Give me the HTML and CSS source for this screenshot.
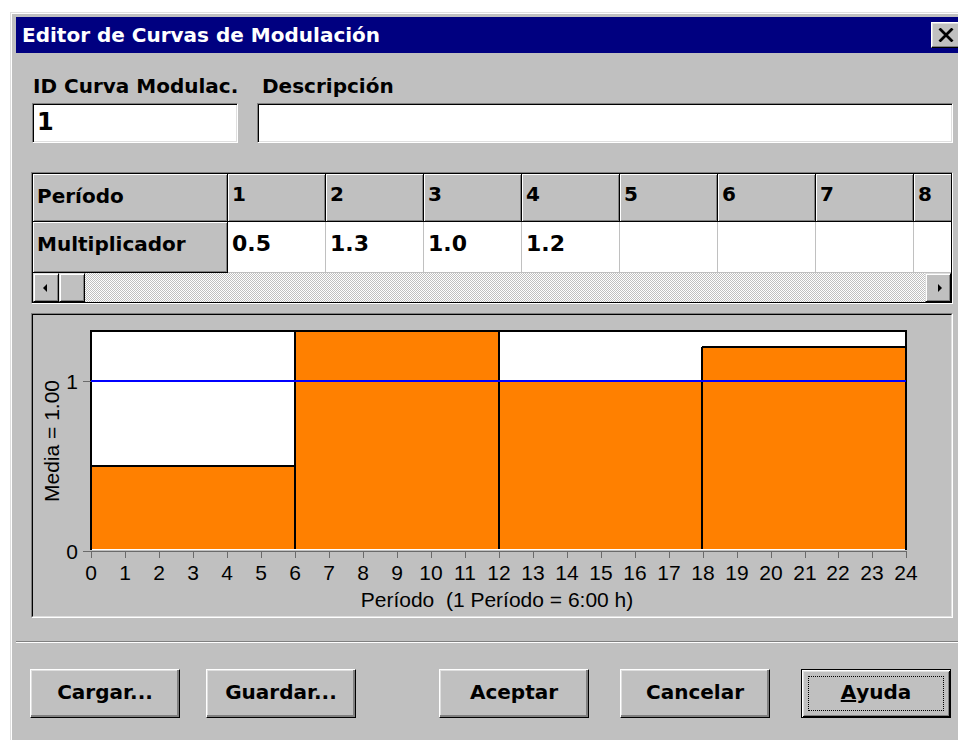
FILE: index.html
```html
<!DOCTYPE html>
<html lang="es">
<head>
    <meta charset="UTF-8">
    <title>Editor de Curvas de Modulación</title>
    <link rel="stylesheet" href="styles.css">
</head>
<body>
    <div class="window">
        <div class="titlebar">
            <span class="title">Editor de Curvas de Modulación</span>
            <button class="close" aria-label="Cerrar">
                <svg width="16" height="14" viewBox="0 0 16 14">
                    <path d="M1.5 0.5L14.5 13.5M14.5 0.5L1.5 13.5" stroke="#000" stroke-width="2.8"/>
                </svg>
            </button>
        </div>

        <div class="content">
            <!-- id + description -->
            <div class="fields">
                <label class="field-label">ID Curva Modulac.</label>
                <label class="field-label desc">Descripción</label>
                <input class="field id" type="text" value="1">
                <input class="field" type="text" value="">
            </div>

            <!-- period grid -->
            <div class="grid">
                <div class="grid-inner">
                    <div class="grid-row head">
                        <div class="cell fixed">Período</div>
                        <div class="cell">1</div>
                        <div class="cell">2</div>
                        <div class="cell">3</div>
                        <div class="cell">4</div>
                        <div class="cell">5</div>
                        <div class="cell">6</div>
                        <div class="cell">7</div>
                        <div class="cell">8</div>
                    </div>
                    <div class="grid-row data">
                        <div class="cell fixed">Multiplicador</div>
                        <div class="cell">0.5</div>
                        <div class="cell">1.3</div>
                        <div class="cell">1.0</div>
                        <div class="cell">1.2</div>
                        <div class="cell"></div>
                        <div class="cell"></div>
                        <div class="cell"></div>
                        <div class="cell"></div>
                    </div>
                    <div class="hscroll">
                        <div class="sb-btn"><span class="arrow left"></span></div>
                        <div class="sb-thumb"></div>
                        <div class="sb-track"></div>
                        <div class="sb-btn"><span class="arrow right"></span></div>
                    </div>
                </div>
            </div>

            <!-- chart -->
            <div class="chart">
                <div class="chart-inner">
                    <svg class="plot" width="918" height="301" viewBox="0 0 918 301">
                        <rect x="58" y="16" width="815" height="219" fill="#fff"/>
                        <g fill="#ff8000">
                            <rect x="58" y="151" width="204" height="83"/>
                            <rect x="262" y="16" width="204" height="218"/>
                            <rect x="466" y="66" width="203" height="168"/>
                            <rect x="669" y="32" width="204" height="202"/>
                        </g>
                        <g stroke="#000" stroke-width="2" fill="none">
                            <path d="M58 235V16H873V235"/>
                            <path d="M58 151H262"/>
                            <path d="M262 16V234M466 16V234M669 32V234"/>
                            <path d="M669 32H873"/>
                        </g>
                        <path d="M58 66H873" stroke="#0000ff" stroke-width="2"/>
                        <g stroke="#6a6a6a" stroke-width="1" shape-rendering="crispEdges">
                            <path d="M58 236.5H873.5"/>
                            <path d="M50 66.5H58M50 236.5H58"/>
                            <path d="M58.5 236V243M92.5 236V243M126.5 236V243M160.5 236V243M194.5 236V243M228.5 236V243M262.5 236V243M296.5 236V243M330.5 236V243M364.5 236V243M398.5 236V243M432.5 236V243M466.5 236V243M500.5 236V243M534.5 236V243M568.5 236V243M602.5 236V243M636.5 236V243M670.5 236V243M704.5 236V243M738.5 236V243M772.5 236V243M805.5 236V243M839.5 236V243M873.5 236V243"/>
                        </g>
                        <g class="axis-label y-ticks">
                            <text x="45" y="74">1</text>
                            <text x="45" y="244">0</text>
                        </g>
                        <g class="axis-label x-ticks">
                            <text x="58" y="265">0</text>
                            <text x="92" y="265">1</text>
                            <text x="126" y="265">2</text>
                            <text x="160" y="265">3</text>
                            <text x="194" y="265">4</text>
                            <text x="228" y="265">5</text>
                            <text x="262" y="265">6</text>
                            <text x="296" y="265">7</text>
                            <text x="330" y="265">8</text>
                            <text x="364" y="265">9</text>
                            <text x="398" y="265">10</text>
                            <text x="432" y="265">11</text>
                            <text x="466" y="265">12</text>
                            <text x="500" y="265">13</text>
                            <text x="534" y="265">14</text>
                            <text x="568" y="265">15</text>
                            <text x="602" y="265">16</text>
                            <text x="636" y="265">17</text>
                            <text x="670" y="265">18</text>
                            <text x="704" y="265">19</text>
                            <text x="738" y="265">20</text>
                            <text x="772" y="265">21</text>
                            <text x="805" y="265">22</text>
                            <text x="839" y="265">23</text>
                            <text x="873" y="265">24</text>
                        </g>
                        <text class="axis-label x-title" x="464" y="292">Período&#160;&#160;(1 Período = 6:00 h)</text>
                        <text class="axis-label y-title" transform="translate(18 126) rotate(-90)">Media = 1.00</text>
                    </svg>
                </div>
            </div>
        </div>

        <div class="separator"></div>

        <div class="footer">
            <div class="btn-group">
                <button class="btn"><span>Cargar...</span></button>
                <button class="btn"><span>Guardar...</span></button>
            </div>
            <div class="btn-group right">
                <button class="btn"><span>Aceptar</span></button>
                <button class="btn"><span>Cancelar</span></button>
                <button class="btn default"><span><u>A</u>yuda</span></button>
            </div>
        </div>
    </div>
</body>
</html>
```

FILE: styles.css
```css
body {
    margin: 0;
    background: #fff;
    overflow: hidden;
    font-family: "DejaVu Sans", sans-serif;
    color: #000;
}

.window {
    box-sizing: border-box;
    width: 958px;
    height: 760px;
    margin: 12px 0 0 10px;
    padding: 4px 5px 0 5px;
    background: #c0c0c0;
    border: 1px solid;
    border-color: #dfdfdf #000 #000 #dfdfdf;
    box-shadow: inset 1px 1px 0 #fff;
}

/* title bar */
.titlebar {
    height: 36px;
    background: #000080;
    display: flex;
    align-items: center;
    justify-content: space-between;
    padding: 0 2px 0 6px;
}

.title {
    color: #fff;
    font-weight: bold;
    font-size: 20px;
    line-height: 36px;
}

.close {
    width: 29px;
    height: 26px;
    padding: 0;
    background: #c0c0c0;
    border: 1px solid;
    border-color: #fff #000 #000 #fff;
    box-shadow: inset -1px -1px 0 #808080, inset 1px 1px 0 #dfdfdf;
    display: flex;
    align-items: center;
    justify-content: center;
}

.content {
    padding: 0 9px 0 15px;
}

/* id / description fields */
.fields {
    display: grid;
    grid-template-columns: 206px 1fr;
    column-gap: 19px;
    row-gap: 7px;
    margin-top: 23px;
    padding-left: 1px;
}

.field-label {
    font-weight: bold;
    font-size: 20px;
    line-height: 20px;
    padding-left: 1px;
    white-space: nowrap;
}

.field-label.desc {
    padding-left: 5px;
}

.field {
    box-sizing: border-box;
    width: 100%;
    height: 40px;
    margin: 0;
    padding: 0 0 3px 4px;
    background: #fff;
    border: 1px solid;
    border-color: #808080 #fff #fff #808080;
    box-shadow: inset 1px 1px 0 #000, inset -1px -1px 0 #dfdfdf;
    font-family: "DejaVu Sans", sans-serif;
    font-weight: bold;
    font-size: 24px;
    color: #000;
    outline: none;
}

/* grid */
.grid {
    margin-top: 29px;
    border: 1px solid;
    border-color: #808080 #fff #fff #808080;
}

.grid-inner {
    border: 1px solid #000;
}

.grid-row {
    display: flex;
    overflow: hidden;
}

.grid-row.head {
    height: 48px;
}

.grid-row.data {
    height: 51px;
}

.cell {
    box-sizing: border-box;
    flex: none;
    width: 98px;
    padding: 10px 0 0 4px;
    font-weight: bold;
    font-size: 20px;
    line-height: 20px;
    background: #fff;
    border-right: 1px solid #c0c0c0;
    border-bottom: 1px solid #c0c0c0;
}

.data .cell {
    font-size: 22px;
    line-height: 22px;
    padding-top: 11px;
}

.head .cell,
.cell.fixed {
    background: #c0c0c0;
    border-right-color: #000;
    border-bottom-color: #000;
    box-shadow: inset 1px 1px 0 #fff, inset -1px -1px 0 #808080;
}

.cell.fixed {
    width: 195px;
    font-size: 20px;
    line-height: 20px;
    padding-top: 12px;
}

.hscroll {
    display: flex;
    height: 29px;
}

.sb-btn,
.sb-thumb {
    box-sizing: border-box;
    flex: none;
    width: 26px;
    background: #c0c0c0;
    border: 1px solid;
    border-color: #dfdfdf #000 #000 #dfdfdf;
    box-shadow: inset 1px 1px 0 #fff, inset -1px -1px 0 #808080;
    display: flex;
    align-items: center;
    justify-content: center;
}

.sb-track {
    flex: 1;
    background: repeating-conic-gradient(#fff 0 25%, #c0c0c0 0 50%) 0 0 / 2px 2px;
}

.arrow {
    width: 0;
    height: 0;
    border-top: 4px solid transparent;
    border-bottom: 4px solid transparent;
}

.arrow.left {
    border-right: 4px solid #000;
    margin-right: 3px;
}

.arrow.right {
    border-left: 4px solid #000;
    margin-left: 3px;
}

/* chart */
.chart {
    margin-top: 9px;
    border: 1px solid;
    border-color: #808080 #fff #fff #808080;
}

.chart-inner {
    border: 1px solid;
    border-color: #000 #dfdfdf #dfdfdf #000;
    height: 301px;
}

.plot {
    display: block;
}

.axis-label {
    font-family: "Liberation Sans", Arial, sans-serif;
    font-size: 21px;
    fill: #000;
}

.x-ticks,
.x-title,
.y-title {
    text-anchor: middle;
}

.y-ticks {
    text-anchor: end;
}

.y-title {
    dominant-baseline: central;
}

.separator {
    margin-top: 23px;
    border-top: 1px solid #808080;
    border-bottom: 1px solid #fff;
}

/* buttons */
.footer {
    display: flex;
    justify-content: space-between;
    padding: 26px 11px 0 14px;
}

.btn-group {
    display: flex;
    gap: 26px;
}

.btn-group.right {
    gap: 31px;
}

.btn {
    box-sizing: border-box;
    width: 150px;
    height: 49px;
    padding: 6px;
    background: #c0c0c0;
    border: 1px solid;
    border-color: #fff #000 #000 #fff;
    box-shadow: inset -2px -2px 0 #808080, inset 1px 1px 0 #dfdfdf;
    font-family: "DejaVu Sans", sans-serif;
    font-weight: bold;
    font-size: 20px;
    color: #000;
}

.btn span {
    box-sizing: border-box;
    display: flex;
    align-items: center;
    justify-content: center;
    height: 100%;
    border: 1px dotted transparent;
    padding-bottom: 3px;
}

.btn.default {
    border-color: #000;
    box-shadow: inset 1px 1px 0 #fff, inset -1px -1px 0 #000, inset 2px 2px 0 #dfdfdf, inset -2px -2px 0 #808080;
}

.btn.default span {
    border-color: #000;
}
```
